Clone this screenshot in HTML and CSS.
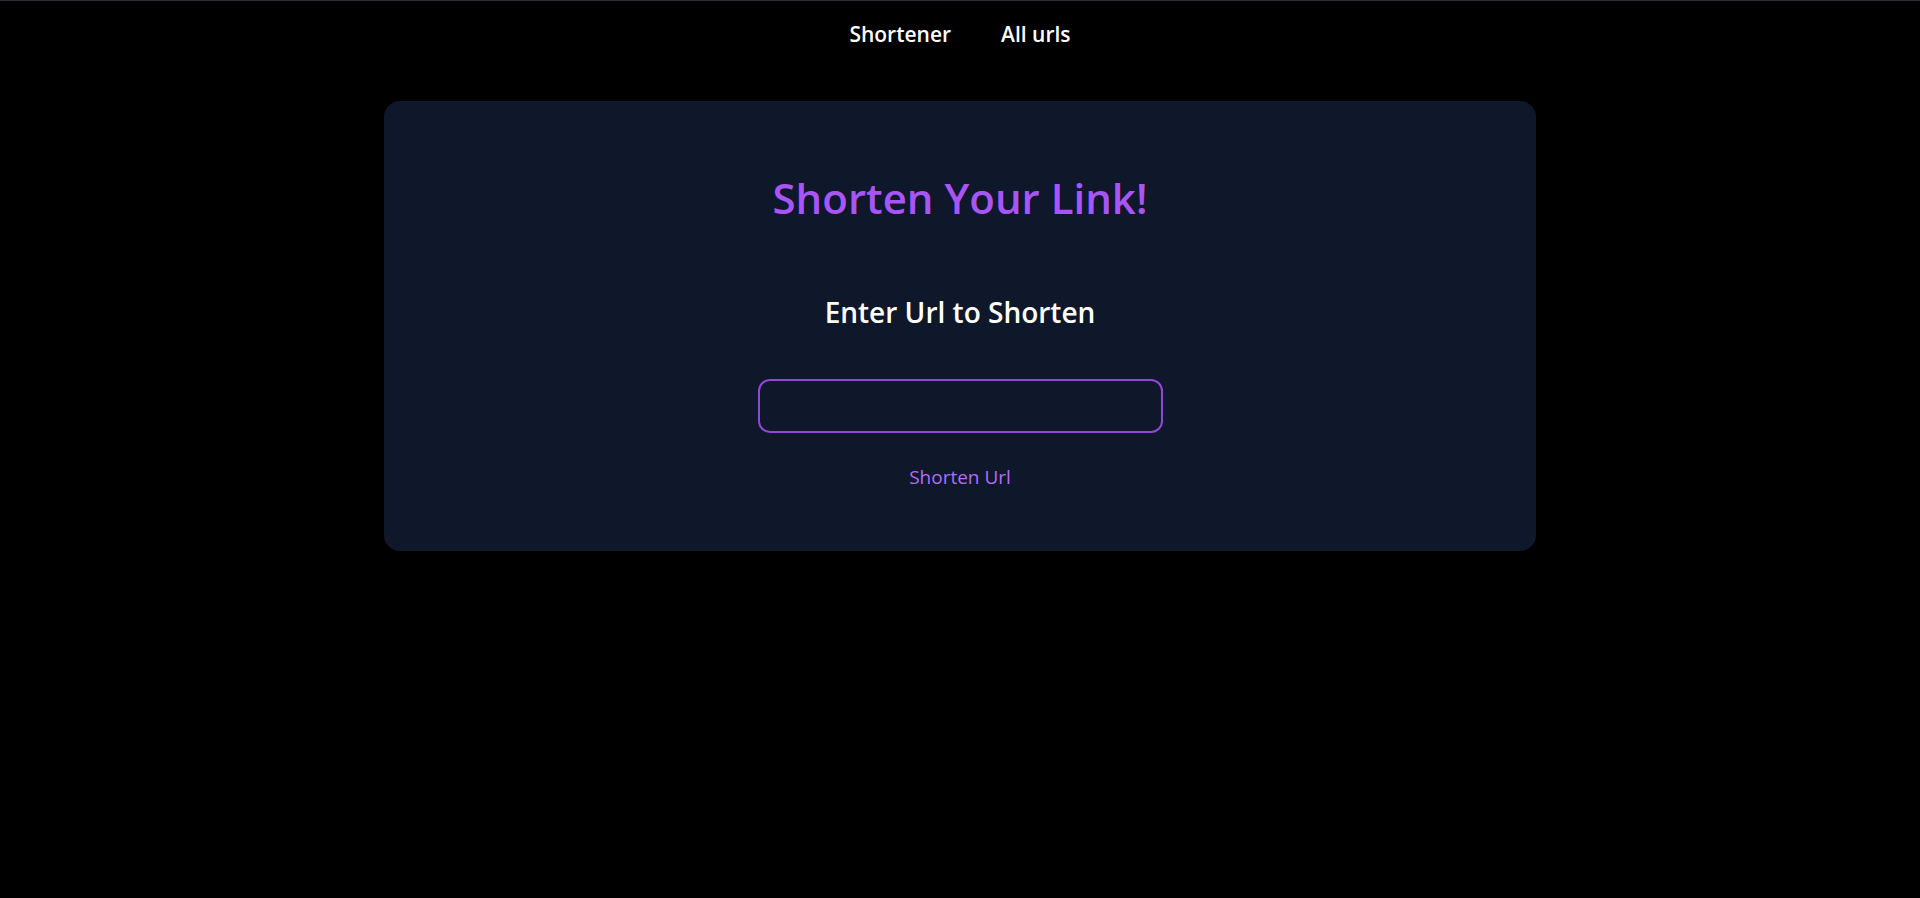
FILE: index.html
```html
<!DOCTYPE html>
<html lang="en">
<head>
<meta charset="utf-8">
<title>Url Shortener</title>
<link rel="stylesheet" href="styles.css">
</head>
<body>
  <nav class="nav">
    <a class="nav-link" href="#">Shortener</a>
    <a class="nav-link" href="#">All urls</a>
  </nav>
  <main class="card">
    <h1 class="title">Shorten Your Link!</h1>
    <label class="label" for="url">Enter Url to Shorten</label>
    <input class="url-input" id="url" type="text">
    <button class="submit" type="button">Shorten Url</button>
  </main>
</body>
</html>
```

FILE: styles.css
```css
* { box-sizing: border-box; }
html, body { margin: 0; padding: 0; }
body {
  background: #000;
  border-top: 1px solid #2a2d3a;
  font-family: "Open Sans", "Noto Sans", sans-serif;
  min-height: 898px;
}
.nav {
  display: flex;
  justify-content: center;
  gap: 50px;
  padding: 19px 0 0;
  height: 100px;
}
.nav-link {
  color: #fff;
  text-decoration: none;
  font-size: 21px;
  line-height: 28px;
  font-weight: 600;
  height: 28px;
}
.card {
  width: 1152px;
  margin: 0 auto;
  background: #0f172a;
  border-radius: 16px;
  padding: 71px 0 60px;
  display: flex;
  flex-direction: column;
  align-items: center;
}
.title {
  margin: 0;
  color: #a855f7;
  font-size: 42px;
  line-height: 52px;
  font-weight: 600;
}
.label {
  margin-top: 70px;
  color: #fff;
  font-size: 28px;
  line-height: 36px;
  font-weight: 600;
}
.url-input {
  margin-top: 49px;
  width: 405px;
  height: 54px;
  border: 2px solid #9146d8;
  border-radius: 12px;
  background: transparent;
  color: #fff;
  font-family: inherit;
  font-size: 18px;
  padding: 0 12px;
  outline: none;
}
.submit {
  margin-top: 30px;
  background: none;
  border: 0;
  padding: 0;
  color: #b26ef6;
  font-family: inherit;
  font-size: 19px;
  line-height: 28px;
  cursor: pointer;
}
```
